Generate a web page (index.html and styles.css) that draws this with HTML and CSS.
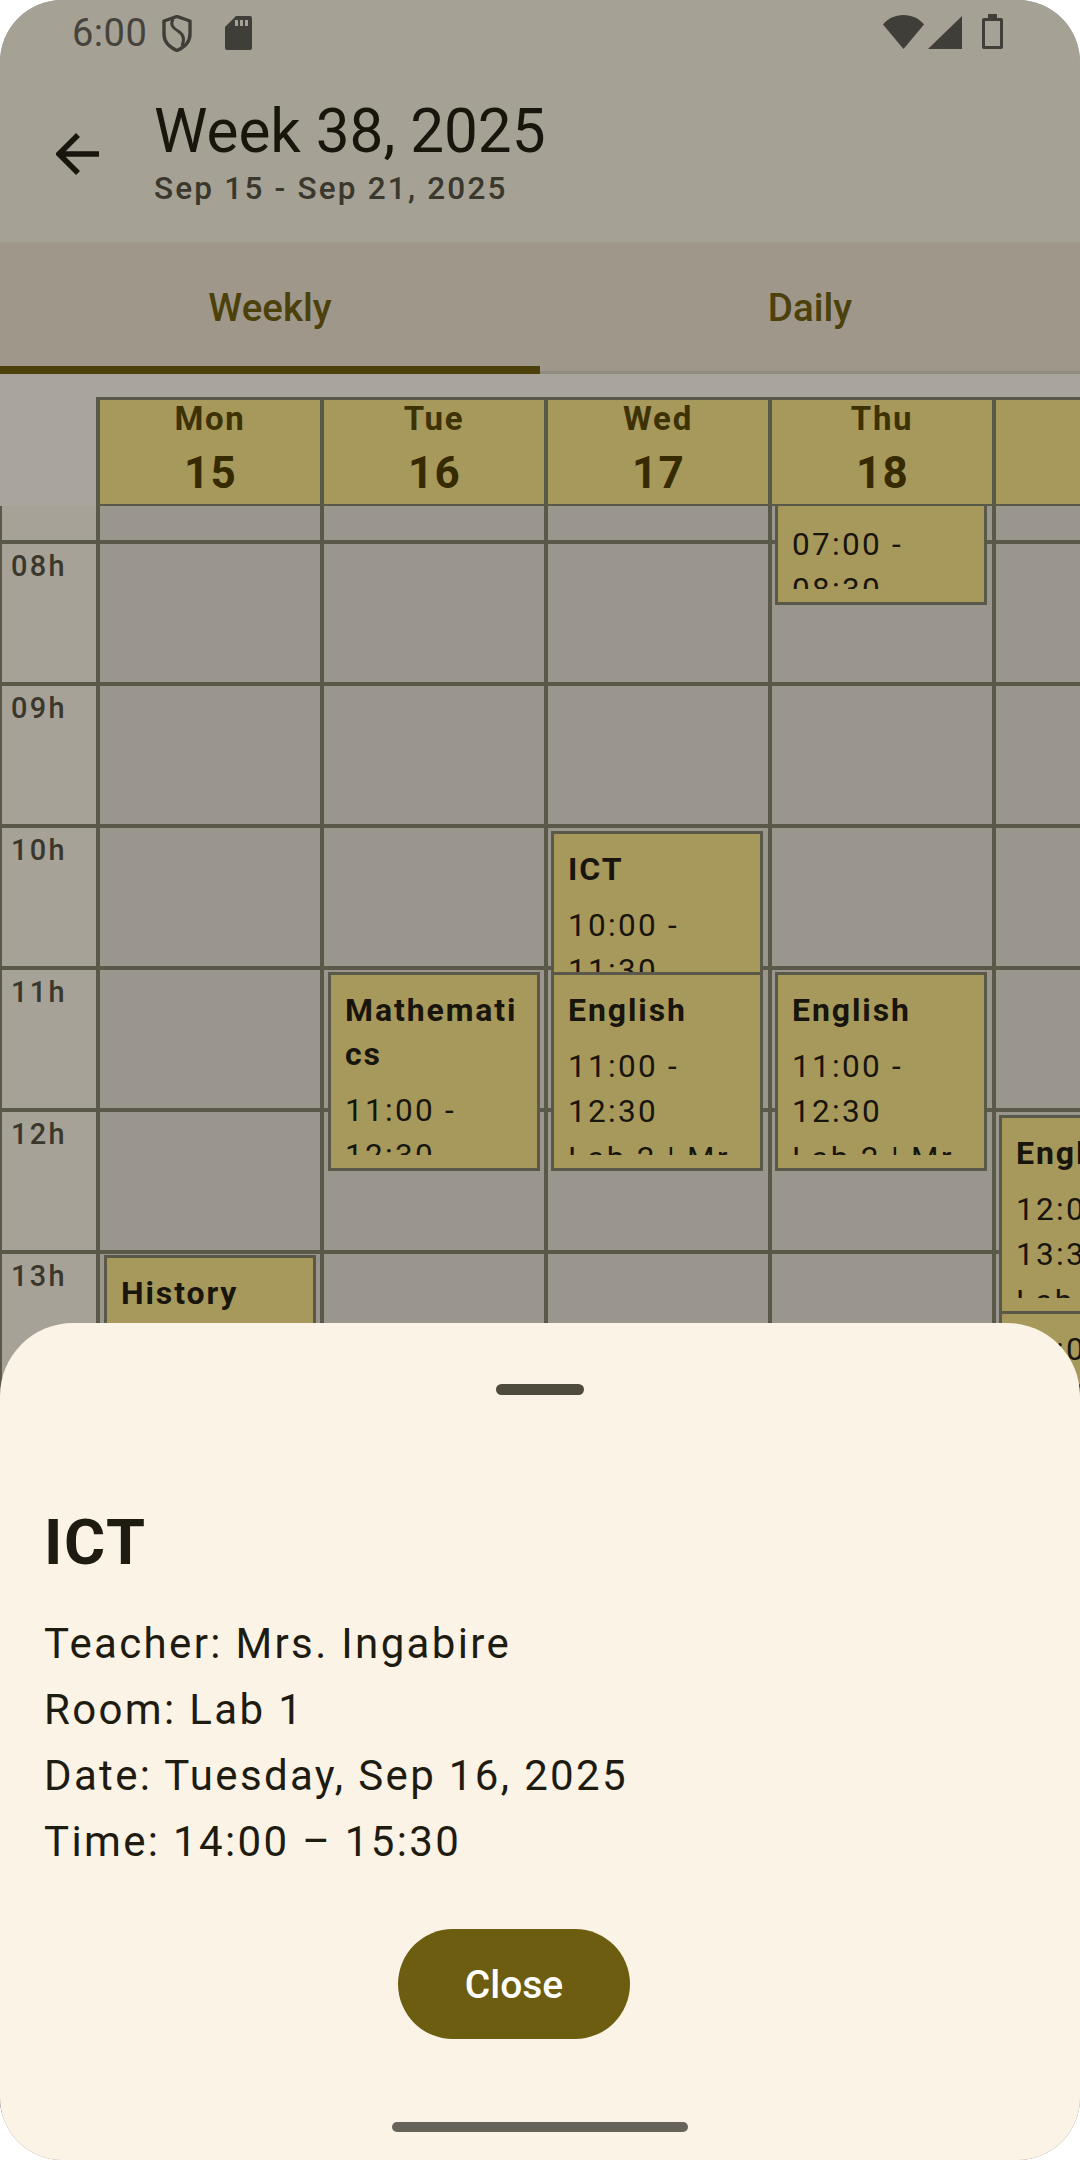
FILE: index.html
```html
<!DOCTYPE html>
<html lang="en">
<head>
<meta charset="utf-8">
<title>Week 38, 2025</title>
<link rel="stylesheet" href="styles.css">
</head>
<body>
<div class="screen">
  <header class="top">
    <div class="status">
      <span class="clock">6:00</span>
      <svg class="ic-shield" viewBox="0 0 30 37"><path d="M15 1.500 28 6v13c0 8-6 13.500-13 16.500C8 32.500 2 27 2 19V6Z" fill="none" stroke="#403e38" stroke-width="3.400" stroke-linejoin="round"/><path d="M11 4c-3 6 0 9 5 12 5 3 7 8 4 15" fill="none" stroke="#403e38" stroke-width="3"/></svg>
      <svg class="ic-sd" viewBox="0 0 27 34"><path d="M11 0h14a2 2 0 0 1 2 2v30a2 2 0 0 1-2 2H2a2 2 0 0 1-2-2V11Z" fill="#403e38"/><path d="M10 4h3v6h-3zM15 4h3v6h-3zM20 4h3v6h-3z" fill="#a5a195"/></svg>
      <span class="spacer"></span>
      <svg class="ic-wifi" viewBox="0 0 41 34"><path d="M0 9.500C5 3.500 12 0 20.500 0S36 3.500 41 9.500L20.500 34Z" fill="#403e38"/></svg>
      <svg class="ic-signal" viewBox="0 0 34 33"><path d="M34 0v33H0Z" fill="#403e38"/></svg>
      <svg class="ic-battery" viewBox="0 0 21 35"><path d="M6 0h9v4h4a2 2 0 0 1 2 2v27a2 2 0 0 1-2 2H2a2 2 0 0 1-2-2V6a2 2 0 0 1 2-2h4Z" fill="#403e38"/><path d="M3 7h15v25H3Z" fill="#a5a195"/></svg>
    </div>
    <div class="appbar">
      <svg class="ic-back" viewBox="0 0 43 42"><path d="M22 2 3 21l19 19M3 21h40" fill="none" stroke="#17150c" stroke-width="5.500"/></svg>
      <div class="titles">
        <h1 class="title">Week 38, 2025</h1>
        <p class="subtitle">Sep 15 - Sep 21, 2025</p>
      </div>
    </div>
  </header>
  <nav class="tabs">
    <div class="tab tab-active">Weekly</div>
    <div class="tab">Daily</div>
  </nav>
  <div class="week-head">
    <div class="corner"></div>
    <div class="head-cell"><span class="dow">Mon</span><span class="dom">15</span></div>
    <div class="head-cell"><span class="dow">Tue</span><span class="dom">16</span></div>
    <div class="head-cell"><span class="dow">Wed</span><span class="dom">17</span></div>
    <div class="head-cell"><span class="dow">Thu</span><span class="dom">18</span></div>
    <div class="head-cell"><span class="dow">Fri</span><span class="dom">19</span></div>
  </div>
  <div class="week-body">
    <div class="hours">
      <div class="hour hour-first"></div>
      <div class="hour">08h</div>
      <div class="hour">09h</div>
      <div class="hour">10h</div>
      <div class="hour">11h</div>
      <div class="hour">12h</div>
      <div class="hour">13h</div>
    </div>
    <div class="day">
      <div class="slot slot-first"></div><div class="slot"></div><div class="slot"></div><div class="slot"></div><div class="slot"></div><div class="slot"></div><div class="slot"></div>
      <article class="event at-13 day-a">
        <div class="clip"><h3 class="ev-title">History</h3><p class="ev-text">13:00 - 14:30</p><p class="ev-text ev-room">Room 4 | Mr.</p></div>
      </article>
    </div>
    <div class="day">
      <div class="slot slot-first"></div><div class="slot"></div><div class="slot"></div><div class="slot"></div><div class="slot"></div><div class="slot"></div><div class="slot"></div>
      <article class="event at-11 day-a">
        <div class="clip"><h3 class="ev-title">Mathematics</h3><p class="ev-text">11:00 - 12:30</p><p class="ev-text ev-room">Room 2 | Mr.</p></div>
      </article>
    </div>
    <div class="day">
      <div class="slot slot-first"></div><div class="slot"></div><div class="slot"></div><div class="slot"></div><div class="slot"></div><div class="slot"></div><div class="slot"></div>
      <article class="event at-10 day-b">
        <div class="clip"><h3 class="ev-title">ICT</h3><p class="ev-text">10:00 - 11:30</p><p class="ev-text ev-room">Lab 1 | Mrs.</p></div>
      </article>
      <article class="event at-11 day-b">
        <div class="clip"><h3 class="ev-title">English</h3><p class="ev-text">11:00 - 12:30</p><p class="ev-text ev-room">Lab 2 | Mrs.</p></div>
      </article>
    </div>
    <div class="day">
      <div class="slot slot-first"></div><div class="slot"></div><div class="slot"></div><div class="slot"></div><div class="slot"></div><div class="slot"></div><div class="slot"></div>
      <article class="event at-07 day-b">
        <div class="clip"><h3 class="ev-title">Mathematics</h3><p class="ev-text">07:00 - 08:30</p><p class="ev-text ev-room">Room 2 | Mr.</p></div>
      </article>
      <article class="event at-11 day-b">
        <div class="clip"><h3 class="ev-title">English</h3><p class="ev-text">11:00 - 12:30</p><p class="ev-text ev-room">Lab 2 | Mrs.</p></div>
      </article>
    </div>
    <div class="day">
      <div class="slot slot-first"></div><div class="slot"></div><div class="slot"></div><div class="slot"></div><div class="slot"></div><div class="slot"></div><div class="slot"></div>
      <article class="event at-13 day-b">
        <div class="clip"><h3 class="ev-title">Science</h3><p class="ev-text">13:00 - 14:30</p><p class="ev-text ev-room">Lab 1 | Mrs.</p></div>
      </article>
      <article class="event at-12 day-b">
        <div class="clip"><h3 class="ev-title">English</h3><p class="ev-text">12:00 - 13:30</p><p class="ev-text ev-room">Lab 2 | Mrs.</p></div>
      </article>
    </div>
  </div>
  <section class="sheet">
    <div class="handle"></div>
    <h2 class="sheet-title">ICT</h2>
    <p class="sheet-line">Teacher: Mrs. Ingabire</p>
    <p class="sheet-line">Room: Lab 1</p>
    <p class="sheet-line">Date: Tuesday, Sep 16, 2025</p>
    <p class="sheet-line">Time: 14:00 – 15:30</p>
    <button class="close" type="button">Close</button>
  </section>
  <div class="nav-pill"></div>
</div>
</body>
</html>
```

FILE: styles.css
```css
* { box-sizing: border-box; }
html, body { margin: 0; padding: 0; background: #fff; }
body { font-family: Roboto, "Noto Sans", sans-serif; }
h1, h2, h3, p { margin: 0; }

.screen {
  position: relative;
  width: 1080px;
  height: 2160px;
  overflow: hidden;
  border-radius: 62px;
  background: #a9a59d;
  display: flex;
  flex-direction: column;
}

.top { height: 242px; background: #a5a195; flex: none; }
.status { height: 66px; display: flex; align-items: flex-start; padding: 14px 77px 0 72px; }
.clock { font-size: 38px; line-height: 38px; color: #45433b; width: 73px; margin-right: 17px; letter-spacing: 0.5px; }
.spacer { flex: 1; }
.ic-shield { width: 30px; height: 37px; margin-top: 1px; margin-right: 33px; }
.ic-sd { width: 27px; height: 34px; margin-top: 2px; }
.ic-wifi { width: 41px; height: 34px; margin-top: 1px; margin-right: 4px; }
.ic-signal { width: 34px; height: 33px; margin-top: 2px; margin-right: 20px; }
.ic-battery { width: 21px; height: 35px; }

.appbar { display: flex; align-items: flex-start; padding-left: 56px; }
.ic-back { width: 43px; height: 42px; margin-top: 67px; margin-right: 54px; flex: none; }
.title { font-size: 60.2px; font-weight: 400; line-height: 68px; color: #17150c; margin-top: 32px; margin-left: 1px; }
.subtitle { font-size: 31.5px; font-weight: 500; line-height: 40px; letter-spacing: 2.2px; color: #3a372c; margin-top: 3px; margin-left: 1px; }

.tabs { height: 132px; flex: none; display: flex; background: #9e978a; box-shadow: inset 0 -3px 0 #8f8b7f; }
.tab { flex: 1; display: flex; align-items: center; justify-content: center; padding-bottom: 1px; font-size: 38.5px; font-weight: 500; color: #4c410b; }
.tab-active { box-shadow: inset 0 -8px 0 #4c3f0a; }

.week-head { flex: none; display: flex; height: 132px; padding-top: 23px; }
.corner { width: 96px; flex: none; }
.head-cell {
  width: 224px;
  flex: none;
  display: flex;
  flex-direction: column;
  align-items: center;
  background: #a7995b;
  border: solid #5a5849;
  border-width: 3px 0 2px 4px;
}
.dow { font-size: 33px; font-weight: 700; line-height: 36px; letter-spacing: 1.7px; color: #3d3204; margin-top: 1px; }
.dom { font-size: 44px; font-weight: 700; line-height: 50px; letter-spacing: 1.3px; color: #362b00; margin-top: 11px; padding-left: 1px; }

.week-body { display: flex; flex: 1; min-height: 0; overflow: hidden; }
.hours { width: 96px; flex: none; background: #a6a297; border-left: 2px solid #5a5849; }
.hour {
  height: 142px;
  border-bottom: 4px solid #5a5849;
  padding: 4px 0 0 9px;
  font-size: 28.9px;
  font-weight: 500;
  line-height: 36px;
  letter-spacing: 2.3px;
  color: #3a372c;
}
.hour-first { height: 38px; padding: 0; }

.day { position: relative; width: 224px; flex: none; background: #9a968e; border-left: 4px solid #5a5849; }
.slot { height: 142px; border-bottom: 4px solid #5a5849; }
.slot-first { height: 38px; }

.event {
  position: absolute;
  width: 212px;
  height: 199px;
  padding: 13px 13px 13px 14px;
  background: #a7995b;
  border: 3px solid #5a5849;
}
.day-a { left: 4px; }
.day-b { left: 3px; }
.at-07 { top: -100px; }
.at-10 { top: 325px; }
.at-11 { top: 466px; }
.at-12 { top: 609px; }
.at-13 { top: 749px; }
.clip { height: 100%; overflow: hidden; overflow-wrap: anywhere; }
.ev-title { font-size: 32px; font-weight: 700; line-height: 44px; letter-spacing: 1.9px; color: #17150c; margin-bottom: 12px; }
.ev-text { font-size: 31.5px; font-weight: 400; line-height: 45px; letter-spacing: 2.3px; color: #17150c; }
.ev-room { word-break: break-all; padding-top: 2px; }

.sheet {
  position: absolute;
  left: 0;
  right: 0;
  top: 1323px;
  bottom: 0;
  padding: 0 44px;
  background: #fbf3e6;
  border-radius: 73px 73px 0 0;
}
.handle { width: 88px; height: 11px; margin: 61px auto 0; border-radius: 6px; background: #4f4b3c; }
.sheet-title { font-size: 63px; font-weight: 700; line-height: 84px; letter-spacing: 1.6px; color: #1e1b10; margin-top: 106px; margin-bottom: 26px; }
.sheet-line { font-size: 42px; line-height: 66px; letter-spacing: 2.35px; color: #1e1b10; }
.close {
  display: block;
  width: 232px;
  height: 110px;
  margin: 54px 0 0 354px;
  padding: 2px 0 0;
  border: 0;
  border-radius: 55px;
  background: #6c5d10;
  color: #fff;
  font-family: inherit;
  font-size: 39px;
  font-weight: 500;
}
.nav-pill {
  position: absolute;
  left: 392px;
  top: 2122px;
  width: 296px;
  height: 10px;
  border-radius: 5px;
  background: #66635b;
}
```
